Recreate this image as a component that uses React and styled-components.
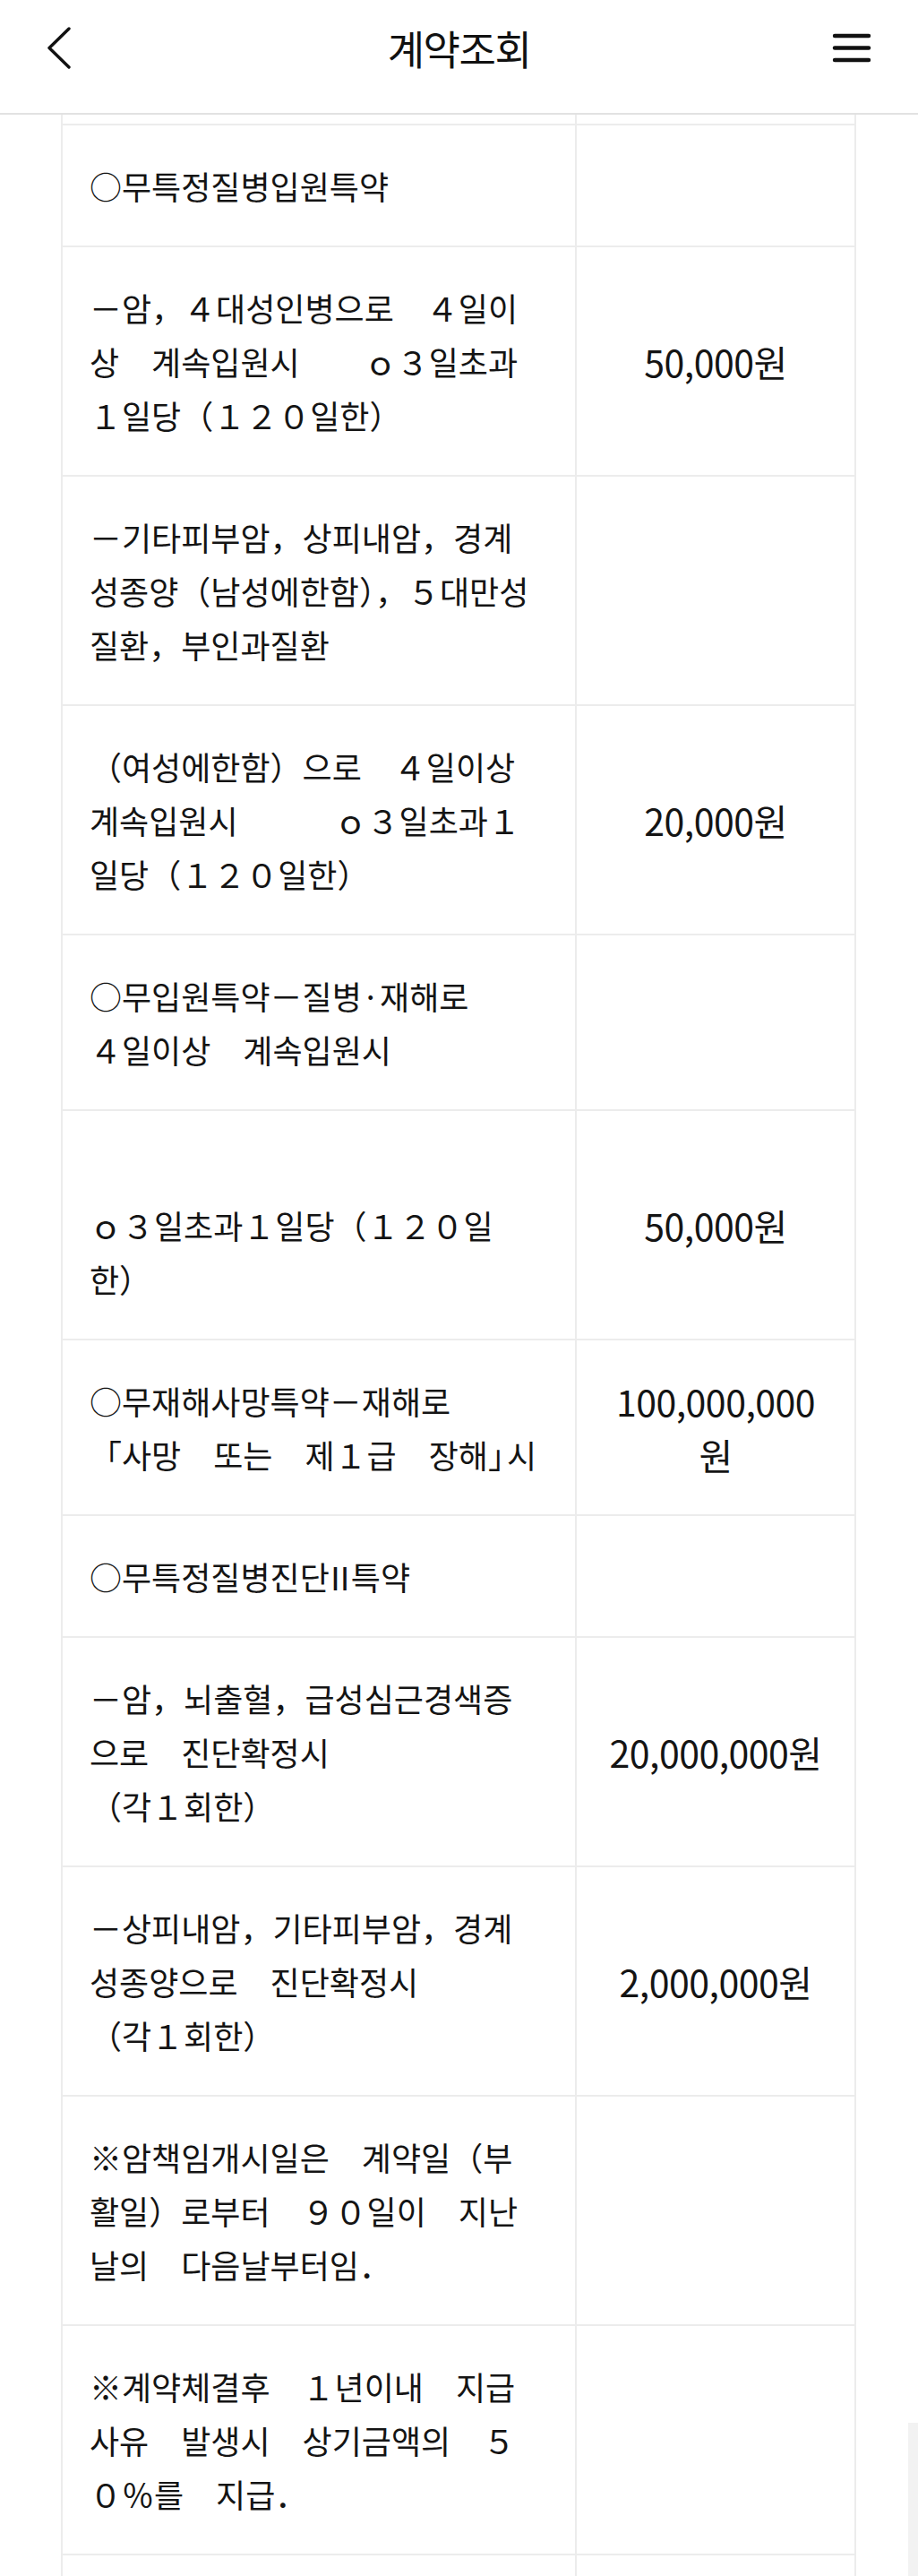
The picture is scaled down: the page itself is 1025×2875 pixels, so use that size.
import React from "react";
import styled, { createGlobalStyle } from "styled-components";

const GlobalStyle = createGlobalStyle`
  html, body {
    margin: 0;
    padding: 0;
    background: #ffffff;
  }
  body {
    font-family: "Noto Sans CJK KR", "Noto Sans", sans-serif;
    color: #141414;
  }
`;

const rows = [
  { left: [""], right: [], sliver: true },
  { left: ["○무특정질병입원특약"], right: [] },
  {
    left: ["－암，４대성인병으로　４일이", "상　계속입원시　　ｏ３일초과", "１일당（１２０일한）"],
    right: ["50,000원"],
  },
  {
    left: ["－기타피부암，상피내암，경계", "성종양（남성에한함），５대만성", "질환，부인과질환"],
    right: [],
  },
  {
    left: ["（여성에한함）으로　４일이상", "계속입원시　　　ｏ３일초과１", "일당（１２０일한）"],
    right: ["20,000원"],
  },
  { left: ["○무입원특약－질병·재해로", "４일이상　계속입원시"], right: [] },
  { left: ["", "ｏ３일초과１일당（１２０일", "한）"], right: ["50,000원"] },
  {
    left: ["○무재해사망특약－재해로", { pre: "「사망　또는　제１급　장해", mid: "」", post: "시", ls: -15 }],
    right: ["100,000,000", "원"],
  },
  { left: [{ pre: "○무특정질병진", mid: "단Ⅱ", post: "특약", ls: -6 }], right: [] },
  {
    left: ["－암，뇌출혈，급성심근경색증", "으로　진단확정시", "（각１회한）"],
    right: ["20,000,000원"],
  },
  {
    left: ["－상피내암，기타피부암，경계", "성종양으로　진단확정시", "（각１회한）"],
    right: ["2,000,000원"],
  },
  {
    left: ["※암책임개시일은　계약일（부", "활일）로부터　９０일이　지난", "날의　다음날부터임．"],
    right: [],
  },
  {
    left: ["※계약체결후　１년이내　지급", "사유　발생시　상기금액의　５", "０％를　지급．"],
    right: [],
  },
  { left: [""], right: [], open: true },
];

// a line given as an object tightens the spacing after its middle part
function renderLine(line) {
  if (typeof line === "object") {
    return (
      <>
        {line.pre}
        <Tight $ls={line.ls}>{line.mid}</Tight>
        {line.post}
      </>
    );
  }
  return line;
}

function App() {
  return (
    <>
      <GlobalStyle />
      <Page>
        <HeaderBar>
          <IconButton aria-label="뒤로">
            <svg width="30" height="48" viewBox="0 0 30 48">
              <polyline
                points="25,3 3,24.5 25,46"
                fill="none"
                stroke="#111"
                strokeWidth="3.4"
                strokeLinecap="round"
                strokeLinejoin="round"
              />
            </svg>
          </IconButton>
          <Title>계약조회</Title>
          <IconButton $right aria-label="메뉴">
            <svg width="44" height="34" viewBox="0 0 44 34">
              <g stroke="#111" strokeWidth="4.4" strokeLinecap="round">
                <line x1="3" y1="4" x2="41" y2="4" />
                <line x1="3" y1="17.5" x2="41" y2="17.5" />
                <line x1="3" y1="31" x2="41" y2="31" />
              </g>
            </svg>
          </IconButton>
        </HeaderBar>

        <Table>
          {rows.map((row, i) => (
            <Row key={i}>
              <TextCell $sliver={row.sliver} $open={row.open}>
                {!row.sliver &&
                  !row.open &&
                  row.left.map((line, j) => <Line key={j}>{renderLine(line)}</Line>)}
              </TextCell>
              <ValueCell $sliver={row.sliver} $open={row.open}>
                {row.right.map((line, j) => (
                  <Amount key={j}>{line}</Amount>
                ))}
              </ValueCell>
            </Row>
          ))}
        </Table>
      </Page>
      <ScrollThumb />
    </>
  );
}

export default App;

const Page = styled.div`
  width: 1025px;
  min-height: 2875px;
  overflow: hidden;
`;

const HeaderBar = styled.header`
  box-sizing: border-box;
  height: 128px;
  padding: 0 52px 20px 52px;
  display: grid;
  grid-template-columns: 1fr auto 1fr;
  align-items: center;
  border-bottom: 2px solid #e2e2e2;
`;

const IconButton = styled.div`
  display: flex;
  justify-content: ${(p) => (p.$right ? "flex-end" : "flex-start")};
  align-items: center;
  svg {
    display: block;
  }
`;

const Title = styled.h1`
  margin: 0;
  font-size: 45px;
  font-weight: 400;
  letter-spacing: -1.5px;
  color: #111;
  line-height: 1;
`;

const Table = styled.div`
  margin-left: 68px;
  width: 888px;
  border-left: 2px solid #ececec;
`;

const Row = styled.div`
  display: grid;
  grid-template-columns: 574px 312px;
`;

const BaseCell = styled.div`
  box-sizing: border-box;
  border-right: 2px solid #ececec;
  border-bottom: ${(p) => (p.$open ? "none" : "2px solid #ececec")};
  height: ${(p) => (p.$sliver ? "12px" : p.$open ? "40px" : "auto")};
  padding: ${(p) => (p.$sliver || p.$open ? "0" : "37px 0")};
`;

const TextCell = styled(BaseCell)`
  padding-left: ${(p) => (p.$sliver || p.$open ? "0" : "30px")};
  font-size: 36px;
  line-height: 60px;
  white-space: nowrap;
`;

const ValueCell = styled(BaseCell)`
  display: flex;
  flex-direction: column;
  justify-content: center;
  align-items: center;
  font-size: 41px;
  line-height: 60px;
  letter-spacing: -0.5px;
`;

const Line = styled.div`
  min-height: 60px;
`;

const Tight = styled.span`
  letter-spacing: ${(p) => p.$ls}px;
`;

const Amount = styled.div`
  white-space: nowrap;
`;

const ScrollThumb = styled.div`
  position: fixed;
  right: 0;
  top: 2704px;
  width: 11px;
  height: 200px;
  background: #f2f2f2;
`;
